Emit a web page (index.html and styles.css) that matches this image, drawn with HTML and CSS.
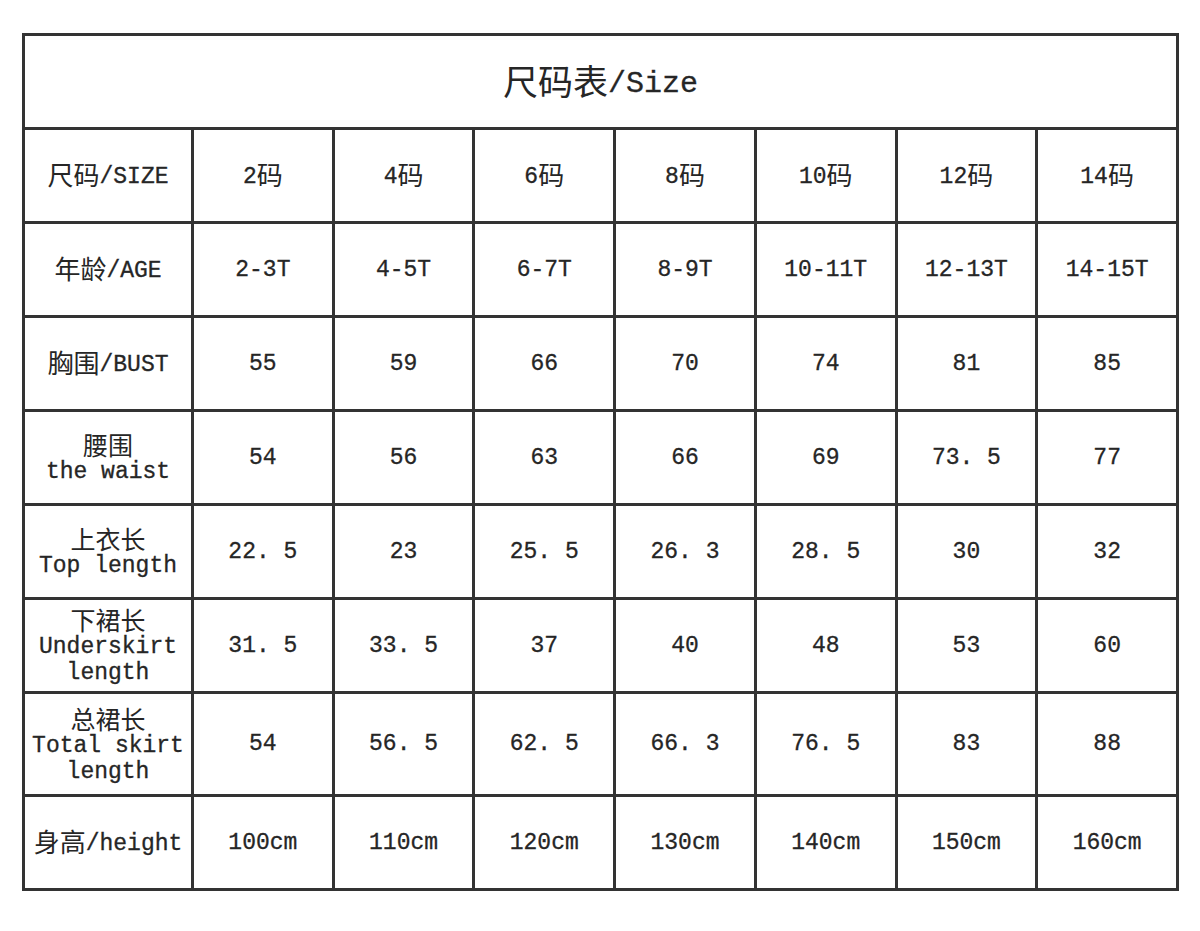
FILE: index.html
```html
<!DOCTYPE html>
<html lang="zh">
<head>
<meta charset="utf-8">
<title>尺码表/Size</title>
<link rel="stylesheet" href="styles.css">
</head>
<body>
<div class="sheet">
  <div class="cell title"><span class="t"><span class="zh">尺码表</span>/Size</span></div>

  <div class="cell head"><span class="t"><span class="zh">尺码</span>/SIZE</span></div>
  <div class="cell"><span class="t">2<span class="zh">码</span></span></div>
  <div class="cell"><span class="t">4<span class="zh">码</span></span></div>
  <div class="cell"><span class="t">6<span class="zh">码</span></span></div>
  <div class="cell"><span class="t">8<span class="zh">码</span></span></div>
  <div class="cell"><span class="t">10<span class="zh">码</span></span></div>
  <div class="cell"><span class="t">12<span class="zh">码</span></span></div>
  <div class="cell"><span class="t">14<span class="zh">码</span></span></div>

  <div class="cell head"><span class="t"><span class="zh">年龄</span>/AGE</span></div>
  <div class="cell">2-3T</div>
  <div class="cell">4-5T</div>
  <div class="cell">6-7T</div>
  <div class="cell">8-9T</div>
  <div class="cell">10-11T</div>
  <div class="cell">12-13T</div>
  <div class="cell">14-15T</div>

  <div class="cell head"><span class="t"><span class="zh">胸围</span>/BUST</span></div>
  <div class="cell">55</div>
  <div class="cell">59</div>
  <div class="cell">66</div>
  <div class="cell">70</div>
  <div class="cell">74</div>
  <div class="cell">81</div>
  <div class="cell">85</div>

  <div class="cell head multi"><span class="zh">腰围</span><span>the waist</span></div>
  <div class="cell">54</div>
  <div class="cell">56</div>
  <div class="cell">63</div>
  <div class="cell">66</div>
  <div class="cell">69</div>
  <div class="cell">73. 5</div>
  <div class="cell">77</div>

  <div class="cell head multi"><span class="zh">上衣长</span><span>Top length</span></div>
  <div class="cell">22. 5</div>
  <div class="cell">23</div>
  <div class="cell">25. 5</div>
  <div class="cell">26. 3</div>
  <div class="cell">28. 5</div>
  <div class="cell">30</div>
  <div class="cell">32</div>

  <div class="cell head multi"><span class="zh">下裙长</span><span>Underskirt</span><span>length</span></div>
  <div class="cell">31. 5</div>
  <div class="cell">33. 5</div>
  <div class="cell">37</div>
  <div class="cell">40</div>
  <div class="cell">48</div>
  <div class="cell">53</div>
  <div class="cell">60</div>

  <div class="cell head multi"><span class="zh">总裙长</span><span>Total skirt</span><span>length</span></div>
  <div class="cell">54</div>
  <div class="cell">56. 5</div>
  <div class="cell">62. 5</div>
  <div class="cell">66. 3</div>
  <div class="cell">76. 5</div>
  <div class="cell">83</div>
  <div class="cell">88</div>

  <div class="cell head"><span class="t"><span class="zh">身高</span>/height</span></div>
  <div class="cell">100cm</div>
  <div class="cell">110cm</div>
  <div class="cell">120cm</div>
  <div class="cell">130cm</div>
  <div class="cell">140cm</div>
  <div class="cell">150cm</div>
  <div class="cell">160cm</div>
</div>
</body>
</html>
```

FILE: styles.css
```css
html, body {
  margin: 0;
  padding: 0;
  background: #ffffff;
}

body {
  font-family: "Liberation Mono", "Noto Sans CJK SC", monospace;
  color: #262626;
}

.sheet {
  margin: 33px 0 0 22px;
  width: 1157px;
  box-sizing: border-box;
  padding: 3px;
  background: #333333;
  display: grid;
  grid-template-columns: 166px repeat(7, 1fr);
  grid-template-rows: repeat(7, 91px) 100px 91px;
  grid-auto-rows: 91px;
  gap: 3px;
}

.cell {
  background: #ffffff;
  display: flex;
  align-items: center;
  justify-content: center;
  font-size: 23px;
  white-space: pre;
  -webkit-text-stroke: 0.3px #262626;
}

.t {
  line-height: 30px;
}

.zh {
  font-family: "Noto Sans CJK SC", sans-serif;
  font-size: 26px;
  vertical-align: -2px;
  -webkit-text-stroke: 0;
}

.title {
  grid-column: 1 / -1;
  font-size: 30px;
}

.title .t {
  line-height: 40px;
}

.title .zh {
  font-size: 35px;
  vertical-align: -3px;
}

.multi {
  flex-direction: column;
  line-height: 26px;
  padding-top: 2px;
  box-sizing: border-box;
}

.multi .zh {
  font-size: 25px;
  line-height: 24px;
  margin-bottom: 3px;
  vertical-align: baseline;
}
```
